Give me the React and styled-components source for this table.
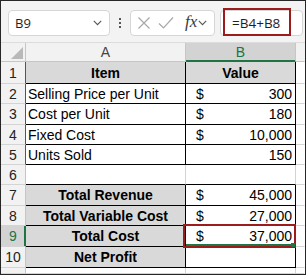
import React from 'react'
import styled, { createGlobalStyle } from 'styled-components'

const GREEN = '#217346'
const GRID = '#d4d4d4'
const HEAD_LINE = '#c6c6c6'

const GlobalStyle = createGlobalStyle`
    html, body {
        margin: 0;
        padding: 0;
        background: #fff;
    }
    body {
        font-family: "Liberation Sans", Arial, sans-serif;
    }
`

const Frame = styled.div`
    width: 306px;
    height: 275px;
    box-sizing: border-box;
    border: 1px solid #262626;
    background: #fff;
    overflow: hidden;
    display: flex;
    flex-direction: column;
`

const FormulaBar = styled.div`
    height: 41px;
    flex: none;
    box-sizing: border-box;
    background: #f3f3f3;
    display: flex;
    align-items: flex-start;
    padding: 9px 2px 0 7px;
    font-family: "Open Sans", "Noto Sans", sans-serif;
`

const Box = styled.div`
    height: 26px;
    box-sizing: border-box;
    background: #fff;
    border: 1px solid #d6d6d6;
    border-radius: 4px;
    display: flex;
    align-items: center;
`

const NameBox = styled(Box)`
    width: 102px;
    justify-content: space-between;
    padding: 0 7px 0 6px;
    font-size: 13px;
    color: #1f1f1f;
`

const Dots = styled.div`
    width: 20px;
    height: 26px;
    display: flex;
    flex-direction: column;
    align-items: center;
    justify-content: center;
    gap: 2px;

    span {
        width: 2px;
        height: 2px;
        background: #555;
    }
`

const ActionBox = styled(Box)`
    width: 85px;
    padding-left: 6px;
    gap: 0;
`

const Fx = styled.span`
    font-family: "Liberation Serif", "Times New Roman", serif;
    font-style: italic;
    font-size: 17px;
    color: #3a3a3a;
    margin: -3px 1px 0 11px;
`

const FormulaBox = styled(Box)`
    flex: 1;
    margin-left: 5px;
    position: relative;
    padding-left: 11px;
    font-size: 13.5px;
    color: #1f1f1f;
`

const Highlight = styled.div`
    position: absolute;
    left: 2px;
    top: -3px;
    width: 68px;
    height: 28px;
    box-sizing: border-box;
    border: 2px solid #9c1b1b;
`

const Row = styled.div`
    display: grid;
    grid-template-columns: 25px 160px 110px 1fr;
    height: ${p => p.$h}px;
    flex: ${p => (p.$fill ? 1 : 'none')};
`

const HeadRow = styled(Row)`
    border-top: 1px solid #dcdcdc;
    box-sizing: border-box;
`

const ColHead = styled.div`
    box-sizing: border-box;
    background: ${p => (p.$sel ? '#d3d3d3' : '#f2f2f2')};
    color: ${p => (p.$sel ? GREEN : '#444')};
    border-right: 1px solid ${p => (p.$last ? 'transparent' : HEAD_LINE)};
    border-bottom: 1px solid ${p => (p.$sel ? GREEN : HEAD_LINE)};
    box-shadow: ${p => (p.$sel ? `inset 0 -1px 0 ${GREEN}` : 'none')};
    font-size: 14px;
    display: flex;
    align-items: center;
    justify-content: center;
`

const Corner = styled(ColHead)`
    align-items: flex-end;
    justify-content: flex-end;
    padding: 0 2px 2px 0;

    &::after {
        content: '';
        width: 12px;
        height: 12px;
        background: #b9b9b9;
        clip-path: polygon(100% 0, 100% 100%, 0 100%);
    }
`

const RowNum = styled.div`
    box-sizing: border-box;
    background: ${p => (p.$sel ? '#d3d3d3' : '#f2f2f2')};
    color: ${p => (p.$sel ? GREEN : '#222')};
    border-right: 1px solid ${p => (p.$sel ? GREEN : p.$edge || HEAD_LINE)};
    border-bottom: 1px solid ${GRID};
    box-shadow: ${p => (p.$sel ? `inset -1px 0 0 ${GREEN}` : 'none')};
    font-size: 14px;
    display: flex;
    align-items: center;
    justify-content: center;
`

const Cell = styled.div`
    position: ${p => (p.$selected ? 'relative' : 'static')};
    box-sizing: border-box;
    min-width: 0;
    white-space: nowrap;
    overflow: ${p => (p.$clip ? 'hidden' : 'visible')};
    background: ${p => (p.$fill ? '#d9d9d9' : '#fff')};
    border-right: 1px solid ${p => p.$rb || GRID};
    border-bottom: 1px solid ${p => p.$bb || GRID};
    box-shadow: ${p => (p.$selected ? `inset 0 -2px 0 ${GREEN}` : 'none')};
    font-size: 14px;
    font-weight: ${p => (p.$bold ? 700 : 400)};
    color: #000;
    display: flex;
    align-items: center;
    justify-content: ${p => p.$align || 'flex-start'};
    padding: ${p => (p.$money ? '0 3px 0 10px' : '0 2px')};
`

const Money = styled(Cell)`
    justify-content: space-between;
`

const SelectBox = styled.div`
    position: absolute;
    left: -3px;
    right: -1px;
    top: -2px;
    bottom: -2px;
    border: 2px solid #9c1b1b;
`

const Handle = styled.div`
    position: absolute;
    right: 0;
    bottom: -1px;
    width: 4px;
    height: 4px;
    background: ${GREEN};
`

const Chevron = () => (
    <svg width="9" height="6" viewBox="0 0 9 6">
        <path d="M0.8 0.8 L4.5 4.6 L8.2 0.8" fill="none" stroke="#555" strokeWidth="1.1" />
    </svg>
)

const rows = [
    { n: 1, h: 22, a: 'Item', b: 'Value', head: true },
    { n: 2, h: 20, a: 'Selling Price per Unit', b: '300', cur: true },
    { n: 3, h: 21, a: 'Cost per Unit', b: '180', cur: true },
    { n: 4, h: 20, a: 'Fixed Cost', b: '10,000', cur: true },
    { n: 5, h: 20, a: 'Units Sold', b: '150' },
    { n: 6, h: 20, blank: true },
    { n: 7, h: 21, a: 'Total Revenue', b: '45,000', cur: true, total: true },
    { n: 8, h: 20, a: 'Total Variable Cost', b: '27,000', cur: true, total: true },
    { n: 9, h: 21, a: 'Total Cost', b: '37,000', cur: true, total: true, sel: true },
    { n: 10, h: 21, a: 'Net Profit', b: '', total: true },
]

const SheetRow = ({ r }) => {
    if (r.blank) {
        return (
            <Row $h={r.h}>
                <RowNum>{r.n}</RowNum>
                <Cell $bb="#000" />
                <Cell $bb="#000" />
                <Cell $rb="transparent" />
            </Row>
        )
    }
    const edge = r.n <= 5 ? '#555' : HEAD_LINE
    const shaded = r.head || r.total
    return (
        <Row $h={r.h}>
            <RowNum $sel={r.sel} $edge={edge}>{r.n}</RowNum>
            <Cell
                $rb="#000"
                $bb="#000"
                $fill={shaded}
                $bold={shaded}
                $align={shaded ? 'center' : 'flex-start'}
                $clip={shaded}
            >
                {r.a}
            </Cell>
            {r.head ? (
                <Cell $rb="#000" $bb="#000" $fill $bold $align="center">{r.b}</Cell>
            ) : r.cur ? (
                <Money $rb="#000" $bb="#000" $money $selected={r.sel}>
                    <span>$</span>
                    <span>{r.b}</span>
                    {r.sel && <SelectBox />}
                    {r.sel && <Handle />}
                </Money>
            ) : (
                <Cell $rb="#000" $bb="#000" $money $align="flex-end">{r.b}</Cell>
            )}
            <Cell $rb="transparent" />
        </Row>
    )
}

const App = () => {
    return (
        <>
            <GlobalStyle />
            <Frame>
                <FormulaBar>
                    <NameBox>
                        <span>B9</span>
                        <Chevron />
                    </NameBox>
                    <Dots>
                        <span />
                        <span />
                        <span />
                    </Dots>
                    <ActionBox>
                        <svg width="14" height="14" viewBox="0 0 14 14">
                            <path d="M1.5 1.5 L12.5 12.5 M12.5 1.5 L1.5 12.5" stroke="#a8a8a8" strokeWidth="1.2" />
                        </svg>
                        <svg width="16" height="14" viewBox="0 0 16 14" style={{ marginLeft: 7 }}>
                            <path d="M1 7.5 L5.5 12 L15 1.5" fill="none" stroke="#a8a8a8" strokeWidth="1.2" />
                        </svg>
                        <Fx>fx</Fx>
                        <Chevron />
                    </ActionBox>
                    <FormulaBox>
                        =B4+B8
                        <Highlight />
                    </FormulaBox>
                </FormulaBar>
                <HeadRow $h={20}>
                    <Corner />
                    <ColHead>A</ColHead>
                    <ColHead $sel>B</ColHead>
                    <ColHead $last />
                </HeadRow>
                {rows.map(r => (
                    <SheetRow key={r.n} r={r} />
                ))}
                <Row $fill>
                    <RowNum />
                    <Cell />
                    <Cell />
                    <Cell $rb="transparent" />
                </Row>
            </Frame>
        </>
    )
}

export default App
